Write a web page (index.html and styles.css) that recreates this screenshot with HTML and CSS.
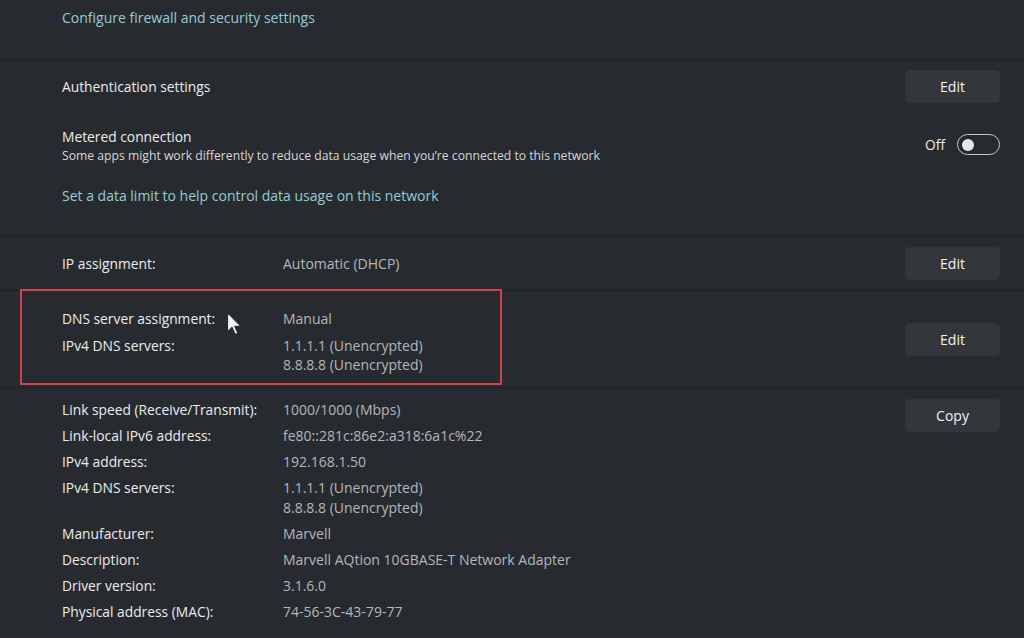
FILE: index.html
```html
<!DOCTYPE html>
<html lang="en">
<head>
<meta charset="utf-8">
<title>Network properties</title>
<link rel="stylesheet" href="styles.css">
</head>
<body>
<div class="page">
  <section class="sec sec-top">
    <a class="link">Configure firewall and security settings</a>
  </section>

  <section class="sec sec-auth">
    <div class="row">
      <div class="title">Authentication settings</div>
      <button class="btn">Edit</button>
    </div>
    <div class="row metered">
      <div class="text">
        <div class="title">Metered connection</div>
        <div class="sub">Some apps might work differently to reduce data usage when you’re connected to this network</div>
      </div>
      <div class="toggle-wrap">
        <span class="toggle-label">Off</span>
        <span class="toggle"><span class="knob"></span></span>
      </div>
    </div>
    <a class="link link-limit">Set a data limit to help control data usage on this network</a>
  </section>

  <section class="sec sec-ip">
    <div class="props">
      <div class="k">IP assignment:</div><div class="v">Automatic (DHCP)</div>
    </div>
    <button class="btn">Edit</button>
  </section>

  <section class="sec sec-dns">
    <div class="props">
      <div class="k">DNS server assignment:</div><div class="v">Manual</div>
      <div class="k">IPv4 DNS servers:</div><div class="v">1.1.1.1 (Unencrypted)<br>8.8.8.8 (Unencrypted)</div>
    </div>
    <button class="btn">Edit</button>
    <div class="highlight"></div>
    <svg class="cursor" width="18" height="26" viewBox="0 0 18 26">
      <path d="M1.5 1.5 L1.5 21 L6 16.5 L9.2 23.5 L12 22.2 L8.9 15.4 L15 15.4 Z" fill="#f2f2f2" stroke="#2a2d30" stroke-width="1.2" stroke-linejoin="round"/>
    </svg>
  </section>

  <section class="sec sec-info">
    <div class="props">
      <div class="k">Link speed (Receive/Transmit):</div><div class="v">1000/1000 (Mbps)</div>
      <div class="k">Link-local IPv6 address:</div><div class="v">fe80::281c:86e2:a318:6a1c%22</div>
      <div class="k">IPv4 address:</div><div class="v">192.168.1.50</div>
      <div class="k">IPv4 DNS servers:</div><div class="v">1.1.1.1 (Unencrypted)<br>8.8.8.8 (Unencrypted)</div>
      <div class="k">Manufacturer:</div><div class="v">Marvell</div>
      <div class="k">Description:</div><div class="v">Marvell AQtion 10GBASE-T Network Adapter</div>
      <div class="k">Driver version:</div><div class="v">3.1.6.0</div>
      <div class="k">Physical address (MAC):</div><div class="v">74-56-3C-43-79-77</div>
    </div>
    <button class="btn btn-copy">Copy</button>
  </section>
</div>
</body>
</html>
```
FILE: styles.css
```css
* { box-sizing: border-box; }
html, body {
  margin: 0;
  padding: 0;
  background: #272b2f;
}
body {
  font-family: "Open Sans", "Noto Sans", sans-serif;
  font-size: 13.8px;
  color: #ececec;
  height: 638px;
  overflow: hidden;
}
.page {
  display: flex;
  flex-direction: column;
}
.sec {
  border-bottom: 1px solid #1e2124;
  padding: 0 24px 0 62px;
}
.link {
  color: #93cdd6;
  line-height: 20px;
  font-size: 14px;
  display: block;
}
.sec-top {
  height: 61px;
  padding-top: 8px;
}
.sec-auth {
  height: 176px;
  padding-top: 9px;
  display: flex;
  flex-direction: column;
}
.row {
  display: flex;
  align-items: center;
  justify-content: space-between;
}
.title { line-height: 20px; }
.metered {
  margin-top: 24px;
  align-items: flex-start;
}
.sub {
  font-size: 12.2px;
  line-height: 18px;
  color: #d6d6d6;
}
.toggle-wrap {
  display: flex;
  align-items: center;
  gap: 12px;
  margin-top: 7px;
}
.toggle-label { line-height: 20px; }
.toggle {
  width: 43px;
  height: 21px;
  border: 1px solid #c9c9c9;
  border-radius: 11px;
  display: flex;
  align-items: center;
  padding-left: 4px;
}
.knob {
  width: 12px;
  height: 12px;
  border-radius: 50%;
  background: #e6e6e6;
}
.link-limit { margin-top: 21px; }

.btn {
  width: 95px;
  height: 33px;
  border: 1px solid #30353a;
  border-radius: 4px;
  background: #33373b;
  color: #f2f2f2;
  font-family: inherit;
  font-size: 14px;
  padding: 0;
  flex: none;
}
.sec-ip {
  height: 54px;
  display: flex;
  align-items: center;
  justify-content: space-between;
}
.props {
  display: grid;
  grid-template-columns: 221px auto;
  row-gap: 6px;
  line-height: 20px;
}
.k { color: #ececec; }
.v { color: #b4b7ba; font-size: 14px; }

.sec-dns {
  position: relative;
  height: 97px;
  display: flex;
  align-items: center;
  justify-content: space-between;
}
.sec-dns .props { margin-top: 4px; row-gap: 7px; }
.sec-dns .v { line-height: 19px; }
.highlight {
  position: absolute;
  left: 20px;
  top: -2px;
  width: 482px;
  height: 96px;
  border: 2px solid #d0434c;
}
.cursor {
  position: absolute;
  left: 226px;
  top: 20px;
}
.sec-info {
  border-bottom: none;
  padding-top: 11px;
  display: flex;
  align-items: flex-start;
  justify-content: space-between;
}
.sec-info .props { margin-top: 1px; }
```
